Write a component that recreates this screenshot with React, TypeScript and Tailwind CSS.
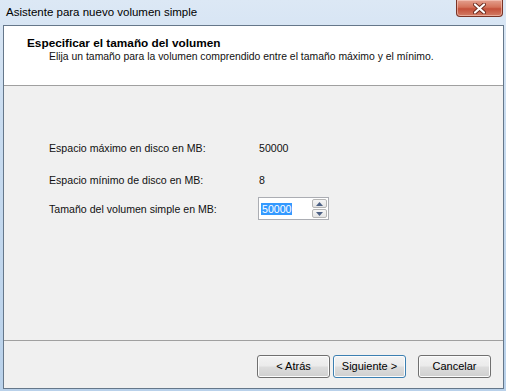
import React from 'react'

const btn =
  'h-[23px] w-[73px] rounded-[3px] border text-[11px] text-black flex items-center justify-center bg-[linear-gradient(to_bottom,#f3f3f3_0%,#ebebeb_48%,#dddddd_52%,#cfcfcf_100%)] shadow-[inset_0_0_0_1px_#fcfcfc]'

function Spin({ up }: { up?: boolean }) {
  return (
    <div className="w-[15px] h-[9px] border border-[#b5b5b5] rounded-[2px] bg-[linear-gradient(to_bottom,#f6f6f6,#e4e4e4)] flex items-center justify-center">
      <svg width="7" height="4" viewBox="0 0 7 4">
        {up ? <path d="M0 4 L3.5 0 L7 4 Z" fill="#4d6185" /> : <path d="M0 0 L3.5 4 L7 0 Z" fill="#4d6185" />}
      </svg>
    </div>
  )
}

export default function App() {
  return (
    <div
      className="w-[506px] h-[391px] flex flex-col bg-[linear-gradient(to_bottom,#dce8f5_0%,#c9dcf0_30%,#b9d1ea_100%)] overflow-hidden"
      style={{ fontFamily: '"Liberation Sans", Arial, sans-serif' }}
    >
      {/* title bar */}
      <div className="h-[25px] flex items-start justify-between">
        <span className="pl-[6px] pt-[5px] text-[11.5px] text-black leading-[14px]">Asistente para nuevo volumen simple</span>
        <div className="mr-[3px] w-[47px] h-[17px] rounded-b-[4px] border border-t-0 border-[#7a3426] bg-[linear-gradient(to_bottom,#e4a08f_0%,#d4725a_45%,#c4503a_55%,#d27d66_100%)] shadow-[inset_0_0_0_1px_rgba(255,220,210,0.5)] flex items-center justify-center">
          <svg width="13" height="11" viewBox="0 0 13 11">
            <path d="M2 1.5 L11 9.5 M11 1.5 L2 9.5" stroke="#6b2a1e" strokeWidth="4" strokeLinecap="round" />
            <path d="M2 1.5 L11 9.5 M11 1.5 L2 9.5" stroke="#ffffff" strokeWidth="2.2" strokeLinecap="round" />
          </svg>
        </div>
      </div>

      {/* client area */}
      <div className="ml-[3px] mr-[2px] mb-[2px] flex-1 border border-[#65778a] bg-[#f0f0f0] flex flex-col text-[10.6px] text-[#111]">
        <div className="h-[60px] bg-white border-b border-[#a0a0a0] pl-[23px] pt-[10px] leading-[14px]">
          <div className="font-bold text-[11.8px] text-black">Especificar el tamaño del volumen</div>
          <div className="pl-[22px] text-[10.4px] text-[#111]">Elija un tamaño para la volumen comprendido entre el tamaño máximo y el mínimo.</div>
        </div>

        <div className="flex-1 pl-[45px] pt-[55px] leading-[14px]">
          <div className="flex">
            <span className="w-[210px]">Espacio máximo en disco en MB:</span>
            <span>50000</span>
          </div>
          <div className="flex mt-[18px]">
            <span className="w-[210px]">Espacio mínimo de disco en MB:</span>
            <span>8</span>
          </div>
          <div className="flex items-center mt-[10px]">
            <span className="w-[209px]">Tamaño del volumen simple en MB:</span>
            <div className="w-[71px] h-[23px] border border-[#abadb3] bg-white flex items-center justify-between pl-[2px] pr-[1px]">
              <span className="bg-[#3399ff] text-white px-[1px] h-[12px] leading-[12px]">50000</span>
              <div className="flex flex-col gap-[1px]">
                <Spin up />
                <Spin />
              </div>
            </div>
          </div>
        </div>

        <div className="h-[48px] border-t border-[#a0a0a0] flex items-start justify-end pt-[14px] pr-[12px]">
          <button className={btn + ' border-[#707070]'}>&lt; Atrás</button>
          <button className={btn + ' ml-[3px] border-[#3c7fb1] shadow-[inset_0_0_0_1px_#9fdaf7]'}>Siguiente &gt;</button>
          <button className={btn + ' ml-[12px] border-[#707070]'}>Cancelar</button>
        </div>
      </div>
    </div>
  )
}
